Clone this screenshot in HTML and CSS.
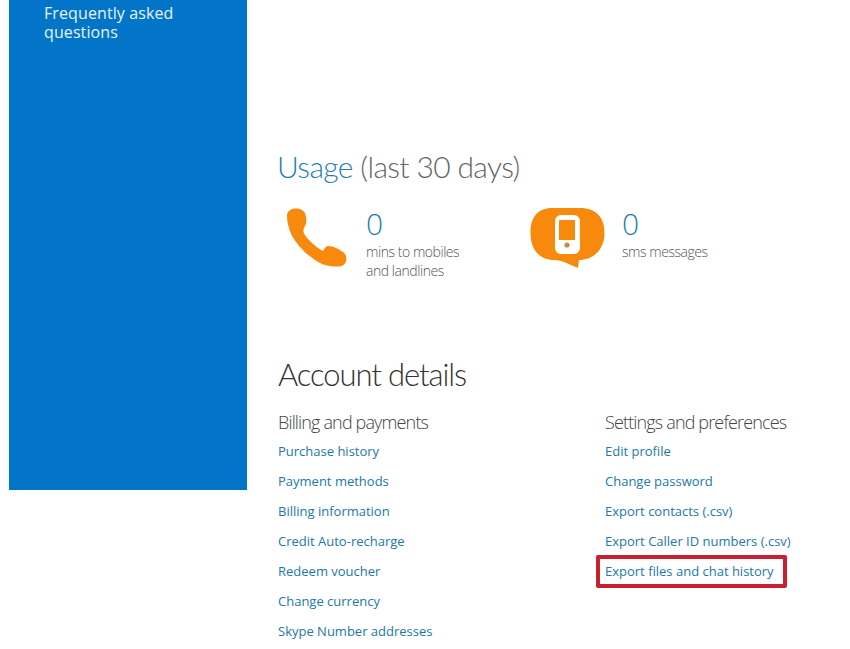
FILE: index.html
```html
<!DOCTYPE html>
<html lang="en">
<head>
<meta charset="utf-8">
<title>Account</title>
<link rel="stylesheet" href="styles.css">
</head>
<body>
<div class="page">
  <aside class="side">
    <a class="side-link">Frequently asked questions</a>
  </aside>
  <main class="main">
    <section class="usage">
      <h2 class="usage-title"><span class="accent">Usage</span> (last 30 days)</h2>
      <div class="stats">
        <div class="stat stat-calls">
          <svg class="icon-phone" viewBox="0 0 62 62" width="62" height="62"><path fill="#f7890c" d="M1 8C1 3 5 .5 10 .5 15 .5 19 3 19.500 7 20.500 11 21 14 19 18 17 21 17 24 18.500 26.500 23 33 30 39 37 43 38.500 41 39 38.500 42 38 47 38 53 41 57 44 60 46 61 50 60 53 59 57 56 58.500 52 58.500 46 58.500 41 58 36 56 24 50 13 40 6 28 3 21 1 15 1 8z"/></svg>
          <div class="stat-text">
            <div class="stat-num">0</div>
            <div class="stat-label">mins to mobiles<br>and landlines</div>
          </div>
        </div>
        <div class="stat">
          <svg class="icon-sms" viewBox="0 0 75 62" width="75" height="62"><path fill="#f7890c" d="M22 1H50C66 1 74.500 10 74.500 26 74.500 42 64 53 49 53L48 61 34 55C32 54 28 53 24 53 9 53 .5 42 .5 26 .5 10 8 1 22 1z"/><rect x="25" y="8" width="25" height="39" rx="6" fill="#fff"/><rect x="29" y="13" width="16" height="20" fill="#f7890c"/><circle cx="37" cy="38" r="2.600" fill="#d9853a"/></svg>
          <div class="stat-text">
            <div class="stat-num">0</div>
            <div class="stat-label">sms messages</div>
          </div>
        </div>
      </div>
    </section>
    <section class="account">
      <h2 class="account-title">Account details</h2>
      <div class="cols">
        <div class="col col-billing">
          <h3 class="col-title">Billing and payments</h3>
          <ul class="links">
            <li><a>Purchase history</a></li>
            <li><a>Payment methods</a></li>
            <li><a>Billing information</a></li>
            <li><a>Credit Auto-recharge</a></li>
            <li><a>Redeem voucher</a></li>
            <li><a>Change currency</a></li>
            <li><a>Skype Number addresses</a></li>
          </ul>
        </div>
        <div class="col">
          <h3 class="col-title">Settings and preferences</h3>
          <ul class="links">
            <li><a>Edit profile</a></li>
            <li><a>Change password</a></li>
            <li><a>Export contacts (.csv)</a></li>
            <li><a>Export Caller ID numbers (.csv)</a></li>
            <li class="marked"><a>Export files and chat history</a></li>
          </ul>
        </div>
      </div>
    </section>
  </main>
</div>
</body>
</html>
```
FILE: styles.css
```css
*, *::after { box-sizing: border-box; }
html, body { margin: 0; height: 649px; overflow: hidden; background: #fff; }
body { font-family: "Open Sans", "Liberation Sans", sans-serif; }
.page { display: flex; align-items: flex-start; padding-left: 9px; }
.side { flex: none; width: 238px; height: 490px; background: #0275c9; padding: 4px 20px 0 35px; }
.side-link { display: block; color: #e8f4fc; font-size: 16px; letter-spacing: .1px; line-height: 19px; width: 170px; }
.main { margin-left: 31px; padding-top: 148px; flex: 1; min-width: 0; }
.usage-title { margin: 0 0 0 -1px; font-family: Lato, "Open Sans", sans-serif; font-size: 30px; font-weight: 300; letter-spacing: -.65px; line-height: 36px; color: #666; }
.accent { color: #1f7fb4; }
.stats { display: flex; margin-top: 23px; }
.stat { display: flex; align-items: flex-start; }
.stat-calls { width: 252px; }
.icon-phone { margin: 1px 18px 0 8px; flex: none; }
.icon-sms { margin: 0 17px 0 0; flex: none; }
.stat-text { padding-top: 2px; }
.stat-num { font-size: 30px; font-weight: 300; line-height: 30px; color: #1f7fb4; }
.stat-label { font-size: 14px; font-weight: 300; letter-spacing: -.45px; line-height: 19px; color: #555; margin-top: 3px; }
.account { margin-top: 75px; }
.account-title { margin: 0; font-family: Lato, "Open Sans", sans-serif; font-size: 31px; font-weight: 300; letter-spacing: -1.1px; line-height: 38px; color: #333; }
.cols { display: flex; margin-top: 17px; }
.col { flex: 1; min-width: 0; }
.col-billing { flex: none; width: 327px; }
.col-title { margin: 0; font-size: 18px; font-weight: 300; letter-spacing: -.85px; line-height: 24px; color: #444; }
.links { list-style: none; margin: 6.500px 0 0; padding: 0; display: flex; flex-direction: column; gap: 9px; }
.links li { font-size: 13px; line-height: 21px; color: #2279a8; }
.marked { position: relative; }
.marked::after { content: ""; position: absolute; left: -9px; top: -6px; width: 191px; height: 33px; border: 4px solid #c8202f; border-radius: 2px; }
```
